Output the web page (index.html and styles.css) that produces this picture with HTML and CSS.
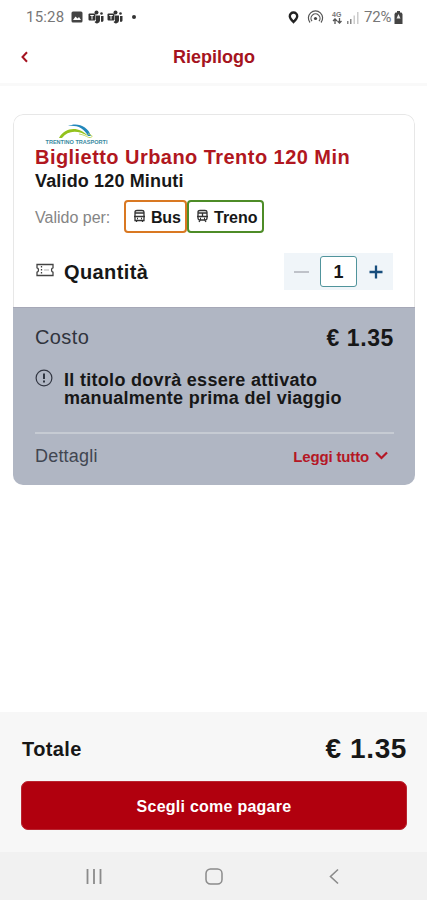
FILE: index.html
```html
<!DOCTYPE html>
<html lang="it">
<head>
    <meta charset="UTF-8">
    <meta name="viewport" content="width=device-width, initial-scale=1.0">
    <title>Riepilogo</title>
    <link rel="stylesheet" href="styles.css">
</head>
<body>
    <div class="status-bar">
        <div class="status-left">
            <span class="clock">15:28</span>
            <svg class="picture" width="12" height="12" viewBox="0 0 12 12"><rect x="0.5" y="0.5" width="11" height="11" rx="1.5" fill="#444"/><path d="M2 9l2.5-3.5 2 2 1.5-1.5L10 9z" fill="#fff"/></svg>
            <svg class="teams" width="16" height="14" viewBox="0 0 16 14"><g fill="#333"><circle cx="8.5" cy="2.5" r="2"/><circle cx="13.5" cy="3.5" r="1.3"/><rect x="0.5" y="3.5" width="7" height="7" rx="1"/><path d="M8 5.5h4v5a3 3 0 0 1-5.5 1.5L8 11zM13 6h2.5v4.5a1.5 1.5 0 0 1-2.5 1z"/></g><path d="M2.3 5.5h3.5M4 5.5v4" stroke="#fff" fill="none"/></svg>
            <svg class="teams" width="16" height="14" viewBox="0 0 16 14"><g fill="#333"><circle cx="8.5" cy="2.5" r="2"/><circle cx="13.5" cy="3.5" r="1.3"/><rect x="0.5" y="3.5" width="7" height="7" rx="1"/><path d="M8 5.5h4v5a3 3 0 0 1-5.5 1.5L8 11zM13 6h2.5v4.5a1.5 1.5 0 0 1-2.5 1z"/></g><path d="M2.3 5.5h3.5M4 5.5v4" stroke="#fff" fill="none"/></svg>
            <span class="more-dot"></span>
        </div>
        <div class="status-right">
            <svg class="location" width="11" height="13" viewBox="0 0 11 13"><path d="M5.5 1.5a3.7 3.7 0 0 1 3.7 3.7c0 2-3.7 5.8-3.7 5.8S1.8 7.2 1.8 5.2a3.7 3.7 0 0 1 3.7-3.7z" fill="none" stroke="#222" stroke-width="2.4"/></svg>
            <svg class="hotspot" width="17" height="14" viewBox="0 0 17 14" fill="none" stroke="#555" stroke-width="1.2"><path d="M3 12.5a7.1 7.1 0 1 1 11 0M5 11.2a4.5 4.5 0 1 1 7 0"/><circle cx="8.5" cy="8.5" r="1.6" fill="#444" stroke="none"/></svg>
            <span class="network"><b>4G</b><svg width="10" height="6" viewBox="0 0 10 6" fill="none" stroke="#555" stroke-width="1.3"><path d="M3 6V1M1 3l2-2 2 2M7.5 0v5M5.5 3l2 2 2-2"/></svg></span>
            <svg class="signal" width="13" height="13" viewBox="0 0 13 13"><path d="M1 10h1.5v3H1zM4 8h1.5v5H4z" fill="#888"/><path d="M7.5 4.5H9V13H7.5zM11 1h1.5v12H11z" fill="#ccc"/></svg>
            <span class="battery-level">72%</span>
            <svg class="battery" width="9" height="13" viewBox="0 0 9 13"><path d="M3 0h3v1.5h1.5l1 1.5v10h-8V3l1-1.5H3z" fill="#444"/><path d="M4.5 3l-2 4.5h4z" fill="#eee"/></svg>
        </div>
    </div>

    <header class="header">
        <svg class="back" width="9" height="14" viewBox="0 0 9 14"><path d="M7 2.2L2.5 7 7 11.8" fill="none" stroke="#a51320" stroke-width="2"/></svg>
        <h1>Riepilogo</h1>
    </header>

    <main>
        <section class="ticket">
            <div class="ticket-top">
                <svg class="logo" width="72" height="22" viewBox="0 0 72 22">
                    <path d="M23 2C32-2 43 2 46 12h-3C39 4 32 1 23 2z" fill="#2388bb"/>
                    <path d="M14 14C20 3 34 2 43 12C33 6 23 6 17 14z" fill="#94c21d"/>
                    <path d="M34 10C40 11 42 13 44 13.5C49 14 47 10 43 10" fill="none" stroke="#c4da62"/>
                    <text x="0.5" y="20" textLength="62" lengthAdjust="spacingAndGlyphs">TRENTINO TRASPORTI</text>
                </svg>
                <h2>Biglietto Urbano Trento 120 Min</h2>
                <p class="validity">Valido 120 Minuti</p>
                <div class="valid-for">
                    <span class="valid-label">Valido per:</span>
                    <span class="tag bus">
                        <svg width="13" height="14" viewBox="0 0 13 14" fill="none" stroke="#333" stroke-width="1.3"><path d="M2 11.500V3q0-1.500 2-1.500h5q2 0 2 1.500v8.500zM2 4h9M1 7.500h11M3.500 11.500V13M9.500 11.500V13M4 9.500h1M8 9.500h1"/></svg>
                        <span>Bus</span>
                    </span>
                    <span class="tag train">
                        <svg width="13" height="14" viewBox="0 0 13 14" fill="none" stroke="#333" stroke-width="1.3"><path d="M2 9V3q0-1.500 2-1.500h5q2 0 2 1.500v6q0 2-2 2H4q-2 0-2-2zM2 4h9M1 7.500h11M6.500 4v3.500M4 11.500L3 13M9 11.500l1 1.500M4 9.500h1M8 9.500h1"/></svg>
                        <span>Treno</span>
                    </span>
                </div>
                <div class="quantity">
                    <svg class="ticket-icon" width="18" height="14" viewBox="0 0 18 14" fill="none" stroke="#444" stroke-width="1.3"><path d="M1 1.5h16v3.3q-1.500.2-1.500 2.2t1.500 2.2v3.300H1V9.200q1.500-.2 1.500-2.200T1 4.800z"/><path d="M5.5 3v8" stroke-dasharray="1.5 1.5"/><path d="M8 7h5" stroke="#ccc"/></svg>
                    <span class="quantity-label">Quantità</span>
                    <div class="stepper">
                        <span class="minus"></span>
                        <span class="count">1</span>
                        <svg class="plus" width="14" height="14" viewBox="0 0 14 14"><path d="M7 0.5v13M0.5 7h13" stroke="#174d7c" stroke-width="2.3"/></svg>
                    </div>
                </div>
            </div>
            <div class="ticket-bottom">
                <div class="row cost">
                    <span class="cost-label">Costo</span>
                    <span class="price">€ 1.35</span>
                </div>
                <div class="notice">
                    <svg width="18" height="18" viewBox="0 0 18 18"><circle cx="9" cy="9" r="7.9" fill="none" stroke="#333743" stroke-width="1.2"/><path d="M9 4.5v5.5M9 11.5v2" stroke="#222733" stroke-width="1.8"/></svg>
                    <p>Il titolo dovrà essere attivato<br>manualmente prima del viaggio</p>
                </div>
                <div class="row details">
                    <span class="details-label">Dettagli</span>
                    <span class="read-all">Leggi tutto
                        <svg width="13" height="9" viewBox="0 0 13 9"><path d="M1 1.5l5.5 5.5L12 1.5" fill="none" stroke="#b51725" stroke-width="2.2"/></svg>
                    </span>
                </div>
            </div>
        </section>
    </main>

    <footer class="checkout">
        <div class="row total">
            <span class="total-label">Totale</span>
            <span class="total-price">€ 1.35</span>
        </div>
        <button>Scegli come pagare</button>
    </footer>
    <nav class="android-nav">
        <svg width="18" height="18" viewBox="0 0 18 18"><path d="M2.5 1v15M9 1v15M15.5 1v15" stroke="#8b8b8b" stroke-width="1.8"/></svg>
        <svg width="18" height="18" viewBox="0 0 18 18"><rect x="1" y="1" width="16" height="15" rx="4.5" fill="none" stroke="#8b8b8b" stroke-width="1.5"/></svg>
        <svg width="18" height="18" viewBox="0 0 18 18"><path d="M13 1.5l-7.5 7 7.5 7" fill="none" stroke="#8b8b8b" stroke-width="1.6"/></svg>
    </nav>
</body>
</html>
```
FILE: styles.css
```css
* {
    box-sizing: border-box;
}
body {
    display: flex;
    flex-direction: column;
    height: 900px;
    margin: 0;
    background-color: #fff;
    color: #171717;
    font-family: "Liberation Sans", Arial, sans-serif;
    overflow: hidden;
}
h1, h2, p {
    margin: 0;
}
svg {
    display: block;
    flex-shrink: 0;
}
.status-bar {
    display: flex;
    justify-content: space-between;
    height: 32px;
    padding: 2px 23px 0 26px;
    color: #777;
}
.status-left, .status-right {
    display: flex;
    align-items: center;
}
.clock {
    width: 39px;
    font: 15px Roboto, sans-serif;
    letter-spacing: 0.2px;
}
.picture {
    margin: 0 5px 0 6px;
}
.teams {
    margin-right: 3px;
}
.more-dot {
    width: 4px;
    height: 4px;
    margin-left: 6px;
    border-radius: 50%;
    background-color: #333;
}
.location {
    margin-right: 2px;
}
.hotspot {
    margin-left: 6px;
}
.network {
    display: flex;
    flex-direction: column;
    width: 11px;
    margin-left: 8px;
    font-size: 7px;
    line-height: 7px;
}
.signal {
    margin: 0 5px 0 3px;
}
.battery-level {
    width: 29px;
    font: 15px Roboto, sans-serif;
    letter-spacing: -0.2px;
}
.battery {
    margin-left: 1px;
}
.status-right {
    padding-right: 1px;
}
.header {
    display: grid;
    grid-template-columns: 40px 1fr 40px;
    align-items: center;
    height: 54px;
    border-bottom: 3px solid #f9f9f9;
}
.back {
    margin-left: 20px;
    margin-bottom: 2px;
}
h1 {
    padding-left: 1px;
    color: #a51320;
    font-size: 18px;
    text-align: center;
}
main {
    flex: 1;
    padding: 28px 12px 0 13px;
}
.ticket {
    border-radius: 10px;
    overflow: hidden;
}
.ticket-top {
    height: 193px;
    padding: 9px 21px 0;
    border: 1px solid #e7e7e7;
    border-bottom: none;
    border-radius: 10px 10px 0 0;
}
.logo {
    margin-left: 10px;
}
.logo text {
    fill: #3889a0;
    font-size: 5.5px;
    font-weight: bold;
}
h2 {
    color: #b11720;
    font-size: 20px;
    line-height: 23px;
    letter-spacing: 0.45px;
    white-space: nowrap;
}
.validity {
    font-size: 18px;
    font-weight: bold;
    line-height: 24px;
    letter-spacing: 0.15px;
}
.valid-for {
    display: flex;
    align-items: center;
    margin-top: 7px;
}
.valid-label {
    width: 89px;
    padding-top: 2px;
    color: #858585;
    font-size: 16px;
}
.tag {
    display: flex;
    align-items: center;
    gap: 5px;
    height: 33px;
    padding-left: 7px;
    border: 2px solid #d97822;
    border-radius: 4px;
    font-size: 16px;
    font-weight: bold;
}
.tag span {
    padding-top: 2px;
}
.tag svg {
    margin-bottom: 1px;
}
.bus {
    width: 63px;
}
.bus span {
    letter-spacing: -0.2px;
}
.train {
    width: 77px;
    border-color: #4d8c27;
}
.quantity {
    display: flex;
    align-items: center;
    margin-top: 20px;
}
.ticket-icon {
    margin-left: 1px;
    margin-bottom: 4px;
}
.quantity-label {
    padding-top: 1px;
    margin-left: 10px;
    font-size: 20px;
    font-weight: bold;
    letter-spacing: 0.4px;
}
.stepper {
    display: flex;
    align-items: center;
    width: 109px;
    height: 37px;
    margin-left: auto;
    background-color: #f0f5f9;
}
.minus {
    width: 15px;
    height: 2px;
    margin: 0 11px 0 10px;
    background-color: #bfc2c9;
}
.count {
    width: 37px;
    height: 31px;
    border: 1px solid #50949c;
    border-radius: 3px;
    background-color: #fff;
    font-size: 18px;
    font-weight: bold;
    line-height: 31px;
    text-align: center;
}
.plus {
    margin-left: 12px;
}
.ticket-bottom {
    height: 178px;
    padding: 13px 21px 0 22px;
    border-top: 1px solid #a6a8b7;
    background-color: #b0b6c3;
}
.row {
    display: flex;
    align-items: center;
    justify-content: space-between;
}
.cost {
    height: 34px;
}
.cost-label {
    padding-bottom: 2px;
    color: #30343d;
    font-size: 20px;
    letter-spacing: 0.4px;
}
.price {
    font-size: 23px;
    font-weight: bold;
    letter-spacing: 0.6px;
}
.notice {
    display: flex;
    gap: 11px;
    height: 79px;
    padding-top: 15px;
    border-bottom: 2px solid #c6cbd3;
}
.notice svg {
    margin-top: -1px;
}
.notice p {
    padding-top: 1px;
    font-size: 18px;
    font-weight: bold;
    line-height: 18px;
    letter-spacing: 0.3px;
    white-space: nowrap;
}
.details {
    height: 44px;
}
.details-label {
    color: #414651;
    font-size: 18px;
    letter-spacing: 0.2px;
}
.read-all {
    display: flex;
    align-items: center;
    gap: 6px;
    margin-right: 6px;
    color: #b51725;
    font-size: 15px;
    font-weight: bold;
    letter-spacing: -0.15px;
}
.read-all svg {
    margin-bottom: 2px;
}
.checkout {
    height: 140px;
    padding: 19px 20px 0 21px;
    background-color: #f7f7f7;
}
.total {
    height: 35px;
}
.total-label {
    padding: 2px 0 0 1px;
    font-size: 20px;
    font-weight: bold;
    letter-spacing: 0.4px;
}
.total-price {
    font-size: 28px;
    font-weight: bold;
    letter-spacing: 0.6px;
}
button {
    display: block;
    width: 100%;
    height: 49px;
    margin-top: 15px;
    padding: 2px 0 0;
    background-color: #b1000e;
    color: #fff;
    border: 1px solid #b92530;
    border-radius: 7px;
    font: bold 16px "Liberation Sans", Arial, sans-serif;
    letter-spacing: 0.25px;
}
.android-nav {
    display: flex;
    justify-content: center;
    gap: 102px;
    height: 48px;
    padding-top: 16px;
    padding-left: 1px;
    background-color: #f1f1f1;
}
```
